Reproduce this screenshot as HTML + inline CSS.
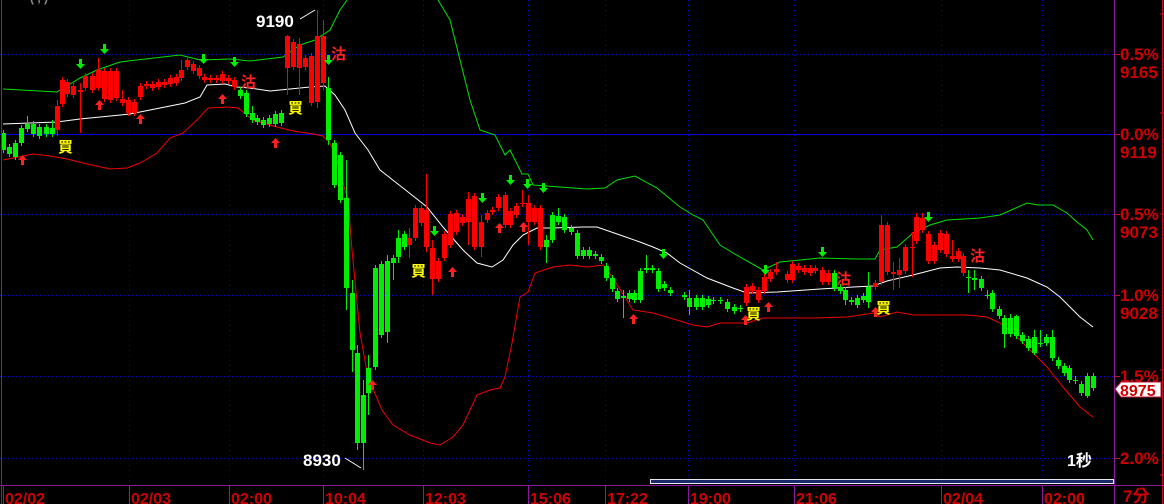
<!DOCTYPE html>
<html><head><meta charset="utf-8"><style>
html,body{margin:0;padding:0;background:#000;width:1164px;height:504px;overflow:hidden}
svg{display:block}
text{font-family:"Liberation Sans","Noto Sans CJK TC",sans-serif;font-weight:bold}
</style></head><body>
<svg id="s" width="1164" height="504" xmlns="http://www.w3.org/2000/svg">
<rect width="1164" height="504" fill="#000"/>
<g stroke="#0000e0" stroke-width="1" stroke-dasharray="1,3">
<line x1="0" y1="54.5" x2="1114" y2="54.5"/>
<line x1="0" y1="214.5" x2="1114" y2="214.5"/>
<line x1="0" y1="295.5" x2="1114" y2="295.5"/>
<line x1="0" y1="376.5" x2="1114" y2="376.5"/>
<line x1="0" y1="458.5" x2="1114" y2="458.5"/>
<line x1="129.5" y1="0" x2="129.5" y2="485" stroke-dasharray="1,4"/>
<line x1="229.5" y1="0" x2="229.5" y2="485" stroke-dasharray="1,4"/>
<line x1="323.5" y1="0" x2="323.5" y2="485" stroke-dasharray="1,4"/>
<line x1="423.5" y1="0" x2="423.5" y2="485" stroke-dasharray="1,4"/>
<line x1="528.5" y1="0" x2="528.5" y2="485" stroke-dasharray="1,4"/>
<line x1="605.5" y1="0" x2="605.5" y2="485" stroke-dasharray="1,4"/>
<line x1="688.5" y1="0" x2="688.5" y2="485" stroke-dasharray="1,4"/>
<line x1="794.5" y1="0" x2="794.5" y2="485" stroke-dasharray="1,4"/>
<line x1="941.5" y1="0" x2="941.5" y2="485" stroke-dasharray="1,4"/>
<line x1="1042.5" y1="0" x2="1042.5" y2="485" stroke-dasharray="1,4"/>
</g>
<line x1="0" y1="134.5" x2="1114" y2="134.5" stroke="#0000e0"/>
<g fill="none" stroke-width="1">
<polyline stroke="#00e000" points="3,89 57,92 80,78 97,70 120,62 180,55 200,60 230,59 250,61 283,57 300,45 315,40 330,30 340,10 347,0"/>
<polyline stroke="#00e000" points="438,0 450,20 460,60 470,100 480,130 495,135 505,155 510,150 522,174 528,174 533,185 587,189 605,188 617,180 635,176 657,188 680,207 693,215 703,220 720,245 733,253 763,270 780,262 820,258 857,259 875,259 880,250 897,247 913,233 930,225 947,220 980,218 1000,215 1027,203 1038,205 1053,205 1067,213 1077,222 1087,230 1093,240"/>
<polyline stroke="#fff" points="3,124 57,122 80,119 130,114 185,103 200,97 207,85 225,84 237,87 250,88 270,91 290,89 310,87 325,86 335,95 345,110 355,133 368,150 380,170 403,188 427,207 443,227 463,250 477,263 492,267 503,260 513,245 523,235 537,228 553,228 583,227 597,227 620,235 640,242 653,247 667,253 680,263 707,278 733,288 747,293 777,292 820,289 853,287 873,286 887,281 913,275 940,268 957,267 980,268 1000,270 1027,278 1047,287 1060,297 1070,307 1080,317 1093,327"/>
<polyline stroke="#f00000" points="3,160 33,154 50,156 67,159 87,164 110,169 127,168 140,163 157,153 170,138 183,133 197,120 208,108 227,107 238,108 253,120 273,126 293,131 313,134 323,136 330,143 337,160 343,183 348,200 352,250 360,333 368,377 382,410 393,425 410,435 430,443 440,445 453,437 463,425 477,395 490,390 500,388 505,377 512,343 520,297 528,292 535,273 553,267 570,265 587,267 603,265 613,278 633,310 653,313 680,321 693,325 707,327 720,323 747,323 763,318 813,318 847,317 873,313 880,317 897,312 913,315 967,315 987,317 1000,323 1013,333 1030,350 1047,367 1063,387 1080,407 1093,417"/>
</g>
<g id="c"></g>
<g id="m"></g>
<text x="256" y="27" fill="#fff" font-size="17">9190</text>
<line x1="300" y1="19" x2="315" y2="10" stroke="#fff"/>
<text x="303" y="466" fill="#fff" font-size="17">8930</text>
<line x1="345" y1="458" x2="361" y2="468" stroke="#fff"/>
<text x="1067" y="466" fill="#fff" font-size="16">1秒</text>
<text x="30" y="2" fill="#888" font-size="12">(   ,   )</text>
<rect x="650.5" y="479.5" width="463" height="4" fill="#1a2a6a" stroke="#e8e8f0"/>
<line x1="0" y1="485.5" x2="1164" y2="485.5" stroke="#8a1a9a"/>
<line x1="1114.5" y1="0" x2="1114.5" y2="504" stroke="#8a1a9a"/>
<line x1="1.5" y1="0" x2="1.5" y2="504" stroke="#c01030"/>
<line x1="1162.5" y1="0" x2="1162.5" y2="504" stroke="#c01030"/>
<g stroke="#c01030"><line x1="1160" y1="14" x2="1164" y2="14"/><line x1="1160" y1="113" x2="1164" y2="113"/><line x1="1160" y1="214" x2="1164" y2="214"/><line x1="1160" y1="370" x2="1164" y2="370"/><line x1="1160" y1="475" x2="1164" y2="475"/></g>
<g stroke="#c01030"><line x1="1114" y1="54.5" x2="1120" y2="54.5"/><line x1="1114" y1="134.5" x2="1120" y2="134.5"/><line x1="1114" y1="214.5" x2="1120" y2="214.5"/><line x1="1114" y1="295.5" x2="1120" y2="295.5"/><line x1="1114" y1="376.5" x2="1120" y2="376.5"/><line x1="1114" y1="458.5" x2="1120" y2="458.5"/></g>
<g fill="#d00000" font-size="17">
<text x="1120" y="60">0.5%</text><text x="1120" y="78">9165</text>
<text x="1120" y="140">0.0%</text><text x="1120" y="158">9119</text>
<text x="1120" y="220">0.5%</text><text x="1120" y="238">9073</text>
<text x="1120" y="301">1.0%</text><text x="1120" y="319">9028</text>
<text x="1120" y="382">1.5%</text>
<text x="1120" y="464">2.0%</text>
<text x="1123" y="502">7分</text>
</g>
<path d="M1115,389 L1121,382 L1161,382 L1161,397 L1121,397 Z" fill="#fff" stroke="#c01030"/>
<text x="1120" y="396" fill="#d00000" font-size="16">8975</text>
<g stroke="#8a1a9a">
<line x1="3.5" y1="485" x2="3.5" y2="504"/><line x1="129.5" y1="485" x2="129.5" y2="504"/>
<line x1="229.5" y1="485" x2="229.5" y2="504"/><line x1="323.5" y1="485" x2="323.5" y2="504"/>
<line x1="423.5" y1="485" x2="423.5" y2="504"/><line x1="528.5" y1="485" x2="528.5" y2="504"/>
<line x1="605.5" y1="485" x2="605.5" y2="504"/><line x1="688.5" y1="485" x2="688.5" y2="504"/>
<line x1="794.5" y1="485" x2="794.5" y2="504"/><line x1="941.5" y1="485" x2="941.5" y2="504"/>
<line x1="1042.5" y1="485" x2="1042.5" y2="504"/>
</g>
<g fill="#d00000" font-size="16">
<text x="5" y="504">02/02</text><text x="131" y="504">02/03</text><text x="231" y="504">02:00</text>
<text x="325" y="504">10:04</text><text x="425" y="504">12:03</text><text x="530" y="504">15:06</text>
<text x="607" y="504">17:22</text><text x="690" y="504">19:00</text><text x="796" y="504">21:06</text>
<text x="943" y="504">02/04</text><text x="1044" y="504">02:00</text>
</g>
</svg>
<script>
var R='#ff0000',G='#00ee00';
var d=[
[3,133,150,'g'],[9,147,154,'g'],[15,143,157,'g'],[21,128,143,'g'],[27,124,129,'g',116],[33,124,134,'g'],[39,127,136,'g'],[46,127,134,'g'],[52,128,134,'g',120],
[57,106,130,'r',100,136],[62,80,104,'r'],[67,82,94,'r'],[73,86,95,'r'],[80,90,92,'r',83,133],[85,76,88,'r'],[92,76,90,'r'],[98,70,88,'r',58],[104,71,99,'r'],[110,71,100,'r'],[116,71,98,'r'],[122,99,103,'r',90],[128,100,113,'r'],[134,102,113,'r'],[140,86,97,'r'],[146,84,86,'r'],[152,84,88,'r'],[158,82,87,'r'],[164,82,85,'r'],[170,78,84,'r'],[176,77,83,'r'],[181,70,78,'r',60],[187,60,67,'r'],[193,64,71,'r'],[199,68,76,'r'],[204,77,80,'r'],[210,78,80,'r'],[216,78,80,'r'],[222,74,81,'r'],[228,78,81,'r'],[234,80,87,'r'],
[240,90,96,'g'],[246,93,114,'g'],[252,113,120,'g',106],[257,118,122,'g'],[263,120,125,'g'],[269,118,124,'g'],[275,114,124,'g'],[281,113,123,'g'],
[287,36,68,'r',35,95],[293,42,67,'r'],[299,44,68,'r',38,95],[305,58,67,'r'],[311,56,103,'r'],[317,36,102,'r',10,108],[323,36,83,'r',20,90],
[328,88,140,'g',77,145],[334,143,185,'g'],[340,155,200,'g'],[346,198,288,'g',160,310],[352,293,350,'g',280,372],[357,353,443,'g',345,450],[363,395,443,'g',380,470],[368,368,393,'g',355,415],[375,268,367,'g'],[381,264,335,'g'],[387,261,332,'g',255,343],[393,258,263,'g',255,280],[398,238,257,'g',230,263],[404,234,247,'g'],
[409,238,245,'r',228,258],[415,208,238,'r'],[421,208,223,'r'],[426,210,247,'r',174,252],[432,248,279,'r',240,295],[438,261,279,'r'],[444,234,258,'r'],[450,214,245,'r'],[456,213,232,'r'],[462,217,223,'r'],[468,199,222,'r',192,245],[474,196,247,'r'],[481,222,247,'r',215,257],[487,213,220,'r'],[492,210,212,'r'],[498,197,208,'r'],[505,195,225,'r'],[510,211,225,'r'],[516,206,215,'r'],[522,203,204,'r',190],[528,203,222,'r',195,245],[534,208,222,'r'],[540,208,247,'r'],
[546,240,247,'g',235,263],[552,215,240,'g'],[558,216,222,'g',208],[564,217,230,'g'],[571,228,232,'g'],[577,233,256,'g'],[583,250,256,'g'],[589,250,256,'g'],[595,254,256,'g'],[601,257,261,'g'],[606,266,278,'g'],[612,278,289,'g'],[617,291,299,'g'],[623,296,298,'g',290,318],[629,293,299,'g'],[634,293,300,'g'],[640,271,300,'g'],[646,268,270,'g',255],[652,268,270,'g'],[658,271,289,'g'],[664,284,288,'g'],[670,290,293,'g'],
[684,295,297,'g'],[689,298,307,'g',290,315],[696,298,307,'g'],[702,298,307,'g'],[708,299,305,'g'],[713,300,301,'g'],[720,300,301,'g'],[727,302,309,'g'],[734,307,311,'g'],[740,308,309,'g'],
[746,287,303,'r'],[752,286,291,'r'],[758,290,300,'r'],[764,277,291,'r'],[770,272,279,'r'],[776,269,272,'r',262],[787,274,280,'r'],[792,264,280,'r'],[798,266,270,'r'],[804,268,272,'r'],[810,268,273,'r'],[815,268,271,'r'],[822,270,282,'r'],[828,273,282,'r'],
[834,273,288,'g'],[840,287,291,'g'],[845,290,300,'g',287,305],[851,300,302,'g'],[857,298,305,'g'],[863,296,300,'g'],[868,287,302,'g',272,308],
[875,283,287,'r'],[881,225,282,'r',215,285],[887,225,272,'r'],[893,272,274,'r',262,290],[899,270,275,'r',258,288],[905,247,271,'r'],[912,247,248,'r',232,277],[916,217,241,'r',213],[922,218,230,'r',213],[928,234,261,'r'],[934,245,261,'r'],[940,233,250,'r'],[946,234,254,'r'],[952,256,259,'r',240],[958,251,259,'r'],[963,256,273,'r'],
[968,277,278,'g',270,293],[974,278,280,'g',270,290],[981,279,288,'g'],[987,295,296,'g',290],[992,293,309,'g'],[999,309,316,'g'],[1004,318,334,'g',315,348],[1010,318,334,'g',314],[1016,316,336,'g',315],[1022,335,341,'g'],[1028,339,348,'g'],[1034,337,353,'g',330,355],[1040,343,344,'g',330],[1046,337,343,'g'],[1052,337,358,'g',330],[1058,360,366,'g'],[1064,366,373,'g'],[1069,368,380,'g'],[1075,380,381,'g',376],[1081,384,393,'g'],[1087,376,396,'g',373,398],[1093,376,388,'g']
];
var c=document.getElementById('c'),h='';
d.forEach(function(a){var x=a[0],t=a[1],b=a[2],col=a[3]=='r'?R:G,hi=a[4]!=null?a[4]:t-3,lo=a[5]!=null?a[5]:b+3;
h+='<line x1="'+(x+.5)+'" y1="'+hi+'" x2="'+(x+.5)+'" y2="'+lo+'" stroke="'+col+'"/>';
h+='<rect x="'+(x-2)+'" y="'+t+'" width="5" height="'+Math.max(1,b-t)+'" fill="'+col+'"/>';});
c.innerHTML=h;
var m='';
function dn(x,y){m+='<path d="M'+(x-1)+','+(y-7)+'h3v5h3l-4.5,5l-4.5,-5h3z" fill="#00ee00"/>';}
function up(x,y){m+='<path d="M'+(x-1)+','+(y+7)+'h3v-5h3l-4.5,-5l-4.5,5h3z" fill="#ff2020"/>';}
function buy(x,y){m+='<text x="'+(x-7)+'" y="'+(y+6)+'" fill="#ffff00" font-size="15">買</text>';}
function sell(x,y){m+='<text x="'+(x-7)+'" y="'+(y+6)+'" fill="#ff2020" font-size="15">沽</text>';}
[[104,51],[80,66],[203,61],[234,64],[328,62],[510,182],[482,200],[434,233],[527,186],[543,190],[765,272],[822,254],[928,219],[663,256]].forEach(function(p){dn(p[0],p[1])});
[[22,158],[99,103],[140,117],[222,97],[275,141],[372,383],[452,270],[499,226],[523,225],[633,317],[745,318],[768,305],[875,310]].forEach(function(p){up(p[0],p[1])});
[[65,146],[295,107],[418,270],[753,313],[883,307]].forEach(function(p){buy(p[0],p[1])});
[[338,53],[248,81],[843,278],[977,255]].forEach(function(p){sell(p[0],p[1])});
document.getElementById('m').innerHTML=m;
</script>
</body></html>
